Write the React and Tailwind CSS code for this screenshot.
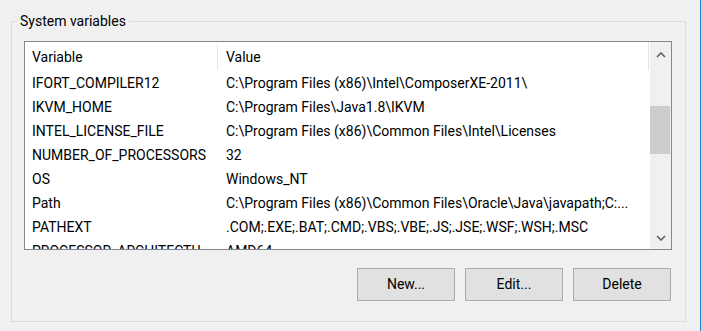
import React from 'react';

const rows = [
  ['IFORT_COMPILER12', 'C:\\Program Files (x86)\\Intel\\ComposerXE-2011\\'],
  ['IKVM_HOME', 'C:\\Program Files\\Java1.8\\IKVM'],
  ['INTEL_LICENSE_FILE', 'C:\\Program Files (x86)\\Common Files\\Intel\\Licenses'],
  ['NUMBER_OF_PROCESSORS', '32'],
  ['OS', 'Windows_NT'],
  ['Path', 'C:\\Program Files (x86)\\Common Files\\Oracle\\Java\\javapath;C:...'],
  ['PATHEXT', '.COM;.EXE;.BAT;.CMD;.VBS;.VBE;.JS;.JSE;.WSF;.WSH;.MSC'],
  ['PROCESSOR_ARCHITECTURE', 'AMD64'],
];

const Chevron = ({ up }) => (
  <svg width="10" height="6" viewBox="0 0 10 6">
    <polyline
      points={up ? '1,5 5,1 9,5' : '1,1 5,5 9,1'}
      fill="none"
      stroke="#606060"
      strokeWidth="1.6"
    />
  </svg>
);

const Button = ({ children }) => (
  <button className="w-[98px] h-[33px] bg-[#e1e1e1] border border-[#adadad] text-black">
    {children}
  </button>
);

const App = () => {
  return (
    <div
      className="w-[701px] h-[331px] bg-[#f0f0f0] border-r border-[#1883d7] pt-[21px] pl-[11px] text-[14px] text-black overflow-hidden"
      style={{ fontFamily: 'Roboto, "Liberation Sans", sans-serif' }}
    >
      <div className="relative w-[675px] h-[301px] border border-[#dcdcdc] pt-[19px] pl-[12px]">
        <span className="absolute left-[5px] top-[-11px] px-[3px] bg-[#f0f0f0] leading-[20px]">
          System variables
        </span>

        <div className="w-[648px] h-[209px] border border-[#828790] bg-white flex">
          <div className="flex-1 overflow-hidden">
            <div className="flex h-[28px] items-center pt-[3px] border-r border-[#e5e5e5] w-[624px]">
              <div className="w-[193px] h-full flex items-center pl-[7px] border-r border-[#e5e5e5]">Variable</div>
              <div className="pl-[8px]">Value</div>
            </div>
            {rows.map(([name, value]) => (
              <div key={name} className="flex h-[24px] leading-[24px] pt-[1px]">
                <div className="w-[193px] pl-[7px] pr-[6px] truncate">{name}</div>
                <div className="w-[430px] pl-[8px] pr-[8px] truncate">{value}</div>
              </div>
            ))}
          </div>

          <div className="w-[21px] ml-[1px] bg-[#f0f0f0] flex flex-col">
            <div className="h-[25px] flex items-center justify-center pt-[1px]">
              <Chevron up />
            </div>
            <div className="flex-1">
              <div className="mt-[39px] h-[48px] w-[20px] bg-[#cdcdcd]" />
            </div>
            <div className="h-[23px] flex items-center justify-center">
              <Chevron />
            </div>
          </div>
        </div>

        <div className="w-[648px] mt-[18px] flex justify-end gap-[10px] pr-[1px]">
          <Button>New...</Button>
          <Button>Edit...</Button>
          <Button>Delete</Button>
        </div>
      </div>
    </div>
  );
};

export default App;
